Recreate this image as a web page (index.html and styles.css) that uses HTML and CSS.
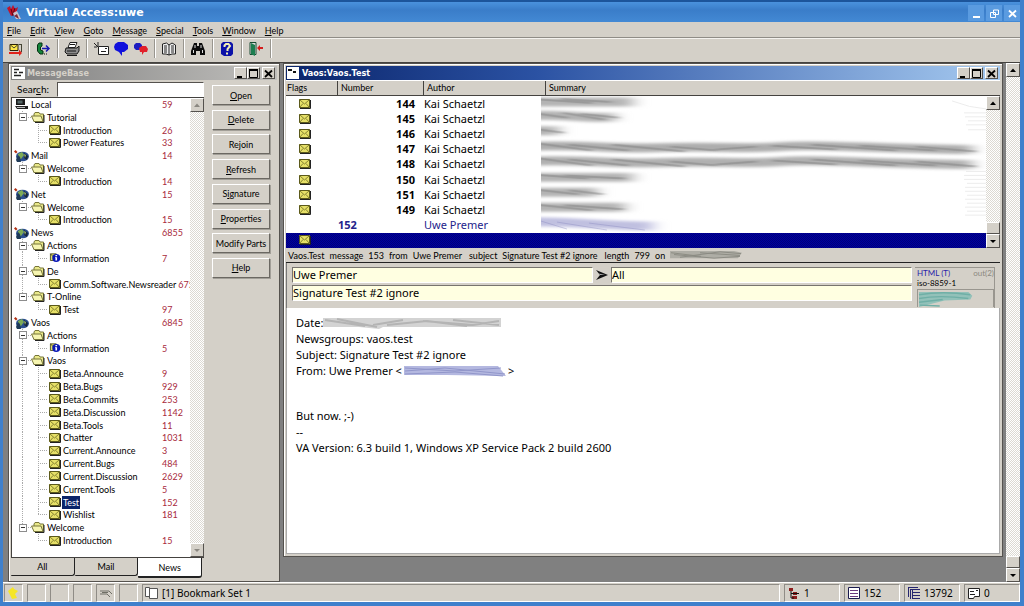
FILE: index.html
```html
<!DOCTYPE html>
<html lang="en">
<head>
<meta charset="utf-8">
<title>Virtual Access:uwe</title>
<link rel="stylesheet" href="styles.css">
</head>
<body>
<svg class="defs" aria-hidden="true">
  <defs>
    <symbol id="mail" viewBox="0 0 12 10"><path d="M0 0h11v9H0z" fill="#e6e067"/><path d="M.5.5h10v8H.5z" fill="none" stroke="#5b591c"/><path d="M1 1l4.500 4L10 1M1 8l3-3.500M10 8L7 4.500" fill="none" stroke="#6d6a24" stroke-width=".8"/><path d="M11.500 1v8.500H1" fill="none" stroke="#222"/></symbol>
    <symbol id="folder" viewBox="0 0 14 11"><path d="M3 2l1-1.500h4l1 1.500h3.500v7.500H3z" fill="#e9e889" stroke="#77763a"/><path d="M.5 4h9.500l2 5.500H3z" fill="#f6f5b0" stroke="#77763a"/><path d="M13 3v7.500H4" fill="none" stroke="#222"/></symbol>
    <symbol id="info" viewBox="0 0 13 12"><path d="M1 1h7v8H1z" fill="#e2de6b" stroke="#444418"/><path d="M1 1l4 4" stroke="#444418"/><circle cx="8" cy="6" r="4.800" fill="#0a18b4"/><path d="M7 2.500h2v1.500H7zM6.500 5H9v4H7V6h-.5z" fill="#fff"/></symbol>
    <symbol id="pc" viewBox="0 0 16 12"><path d="M2 1h9v6H2z" fill="#1b1b1b"/><path d="M3.500 2.500h5v3h-5z" fill="#566"/><path d="M1 8h13v3H3z" fill="#222"/><path d="M3 9.500h8" stroke="#bbb"/></symbol>
    <symbol id="globe" viewBox="0 0 16 12"><path d="M0 1.500L1.500 0 3.500 2 2 3.500z" fill="#b33013"/><ellipse cx="8.500" cy="6.500" rx="6.500" ry="4.800" fill="#2c4f8f"/><path d="M4 4l4-2 2 3-3 4-3-1z" fill="#7dab57"/><path d="M2 10l2-5 2 2 1 5H3z" fill="#1f3a57"/><path d="M10 3l4 3-1 4-3-2z" fill="#16253a"/><path d="M10 4l2 1-1 3z" fill="#a4bf6a"/></symbol>
    <symbol id="min" viewBox="0 0 9 9"><path d="M1 7h5v2H1z"/></symbol>
    <symbol id="max" viewBox="0 0 9 9"><path d="M.5 1h8v7.500h-8z" fill="none" stroke="currentColor"/><path d="M0 0h9v2H0z"/></symbol>
    <symbol id="close" viewBox="0 0 9 9"><path d="M1 1.500l7 6.500M8 1.500L1 8" fill="none" stroke="currentColor" stroke-width="1.800"/></symbol>
    <symbol id="up" viewBox="0 0 8 8"><path d="M1 6l3-3.500L7 6z"/></symbol>
    <symbol id="down" viewBox="0 0 8 8"><path d="M1 3h6L4 6z"/></symbol>
    <filter id="soft" x="-5%" y="-60%" width="110%" height="220%"><feGaussianBlur stdDeviation="3 0.700"/></filter>
    <filter id="softer" x="-5%" y="-60%" width="110%" height="220%"><feGaussianBlur stdDeviation="8 1.800"/></filter>
  </defs>
</svg>

<header class="titlebar">
  <svg class="logo" viewBox="0 0 14 16"><path d="M0 3l3-2 1 3 2-4 2 4 3-2-2 7-5 2z" fill="#c3132a"/><path d="M4 4l2 7M8 3L6 9" stroke="#5c0712" fill="none"/><path d="M6 8l4-2 4 8H9z" fill="#c9c2cb"/><path d="M7 11l3-2 2 5z" fill="#7d2734"/></svg>
  <h1>Virtual Access:uwe</h1>
  <div class="appctl">
    <button aria-label="Minimize"><svg viewBox="0 0 9 9"><path d="M1 7h7v2H1z"/></svg></button>
    <button aria-label="Restore"><svg viewBox="0 0 9 9"><path d="M3.500 1h5v4.500h-5zM.5 3.500h5v5h-5z" fill="none" stroke="currentColor"/></svg></button>
    <button aria-label="Close"><svg viewBox="0 0 9 9"><use href="#close"/></svg></button>
  </div>
</header>

<nav class="menu">
  <a href="#"><u>F</u>ile</a><a href="#"><u>E</u>dit</a><a href="#"><u>V</u>iew</a><a href="#"><u>G</u>oto</a><a href="#"><u>M</u>essage</a><a href="#"><u>S</u>pecial</a><a href="#"><u>T</u>ools</a><a href="#"><u>W</u>indow</a><a href="#"><u>H</u>elp</a>
</nav>

<div class="toolbar">
  <div class="tgroup first"><button aria-label="Send and receive"><svg viewBox="0 0 16 16"><path d="M2 3.500h8v6H2z" fill="#ffe84a" stroke="#2b2205"/><path d="M2.500 4L6 7l3.500-3M13.500 3v8M10.500 3.500h3" fill="none" stroke="#443"/><path d="M1 11h10V8.500l3 3.500-3 3v-2H1z" fill="#e0231b"/></svg></button></div>
  <div class="tgroup"><button aria-label="Connect"><svg viewBox="0 0 16 16"><path d="M7 2H4L2.500 4v6L5 13h3v-3L5.500 9V6L7 5z" fill="#14853a" stroke="#062e12"/><path d="M7 7.500h6M11 4.500l3 3-3 3" fill="none" stroke="#1717b0" stroke-width="1.500"/><path d="M9 13h1M11 13h1" stroke="#111"/></svg></button></div>
  <div class="tgroup"><button aria-label="Print"><svg viewBox="0 0 16 16"><path d="M6 1.500h7l-2 5H4z" fill="#fff" stroke="#222"/><path d="M2 7h11l2-2v5l-2 3H3l-2-2z" fill="#8d8d8d" stroke="#171717"/><path d="M3 10h9M6 3.500h5M3 14.500h10" stroke="#171717"/></svg></button></div>
  <div class="tgroup wide">
    <button aria-label="New message"><svg viewBox="0 0 16 16"><path d="M5.500 5.500h10v8h-10z" fill="#fff" stroke="#222"/><path d="M8 10.500h5M12 7.500h2M1 2l4 4M5 1v4M1 6h3" stroke="#222"/></svg></button>
    <button aria-label="Comment"><svg viewBox="0 0 16 16"><path d="M2 3l3-2h6l4 3v4l-4 3H9v4l-3-4-4-2-1-3z" fill="#1010dc"/></svg></button>
    <button aria-label="Reply"><svg viewBox="0 0 16 16"><path d="M1 4l2-2h4l2 2v3L6 9H3L1 7z" fill="#1c1cc0"/><path d="M6 7l3-2h4l2 3-1 3h-3l-2 3v-3H7z" fill="#e1202a"/></svg></button>
  </div>
  <div class="tgroup"><button aria-label="Address book"><svg viewBox="0 0 16 16"><path d="M1.500 3l4-1L8 4l3-2 3.500 2v9H11l-3 1-3-1H1.500z" fill="#eee" stroke="#222"/><path d="M8 4v10M3 5h3M3 7h3M3 9h3M3 11h3M10 5h3M10 7h3M10 9h3M10 11h3" stroke="#222"/></svg></button></div>
  <div class="tgroup"><button aria-label="Find"><svg viewBox="0 0 16 16"><path d="M4 2h3v3h2V2h3l3 8v4h-5v-4H6v4H1v-4z" fill="#0b0b0b"/><path d="M5 4v3M3.500 9v3M11 4v3M12.500 9v3" stroke="#ddd"/></svg></button></div>
  <div class="tgroup"><button aria-label="Help"><svg viewBox="0 0 16 16"><path d="M4 1h8l2 2v10l-2 2H5l-3-2V3z" fill="#0c12a8"/><path d="M5.500 6V4.500L7 3h2.500L11 5 8.500 8v2M8 11.500v2" fill="none" stroke="#f3f0b4" stroke-width="2"/></svg></button></div>
  <div class="tgroup"><button aria-label="Exit"><svg viewBox="0 0 16 16"><path d="M2 1.500h6v12H2z" fill="#ddd" stroke="#174b31"/><path d="M3 2l4 2v11l-4-2z" fill="#1d7e50"/><path d="M9 7l3-3v2h3v2h-3v2z" fill="#d51d1d"/></svg></button></div>
</div>

<main class="mdi">
  <section class="win base">
    <div class="wtitle inactive">
      <svg class="wicon" viewBox="0 0 13 12"><path d="M0 0h13v12H0z" fill="#fff"/><path d="M2 2.500h5M2 5.500h3M7 5.500h4M2 8.500h7" stroke="#222" stroke-width="1.500"/></svg>
      <h2>MessageBase</h2>
      <div class="wctl"><button aria-label="Minimize"><svg><use href="#min"/></svg></button><button aria-label="Maximize"><svg><use href="#max"/></svg></button><button aria-label="Close"><svg><use href="#close"/></svg></button></div>
    </div>
    <div class="basebody">
      <div class="left">
        <div class="search"><label for="q">Sear<u>c</u>h:</label><input id="q" type="text"></div>
        <div class="treebox">
          <ul class="tree">
            <li class="l0"><span><svg><use href="#pc"/></svg>Local</span><b>59</b></li>
            <li class="l1 last"><span><i></i><svg><use href="#folder"/></svg>Tutorial</span></li>
            <li class="l2"><span><svg><use href="#mail"/></svg>Introduction</span><b>26</b></li>
            <li class="l2 end"><span><svg><use href="#mail"/></svg>Power Features</span><b>33</b></li>
            <li class="l0"><span><svg><use href="#globe"/></svg>Mail</span><b>14</b></li>
            <li class="l1 last"><span><i></i><svg><use href="#folder"/></svg>Welcome</span></li>
            <li class="l2 end"><span><svg><use href="#mail"/></svg>Introduction</span><b>14</b></li>
            <li class="l0"><span><svg><use href="#globe"/></svg>Net</span><b>15</b></li>
            <li class="l1 last"><span><i></i><svg><use href="#folder"/></svg>Welcome</span></li>
            <li class="l2 end"><span><svg><use href="#mail"/></svg>Introduction</span><b>15</b></li>
            <li class="l0"><span><svg><use href="#globe"/></svg>News</span><b>6855</b></li>
            <li class="l1"><span><i></i><svg><use href="#folder"/></svg>Actions</span></li>
            <li class="l2 end cont"><span><svg><use href="#info"/></svg>Information</span><b>7</b></li>
            <li class="l1"><span><i></i><svg><use href="#folder"/></svg>De</span></li>
            <li class="l2 end cont"><span><svg><use href="#mail"/></svg>Comm.Software.Newsreader</span><b>675'</b></li>
            <li class="l1 last"><span><i></i><svg><use href="#folder"/></svg>T-Online</span></li>
            <li class="l2 end"><span><svg><use href="#mail"/></svg>Test</span><b>97</b></li>
            <li class="l0"><span><svg><use href="#globe"/></svg>Vaos</span><b>6845</b></li>
            <li class="l1"><span><i></i><svg><use href="#folder"/></svg>Actions</span></li>
            <li class="l2 end cont"><span><svg><use href="#info"/></svg>Information</span><b>5</b></li>
            <li class="l1"><span><i></i><svg><use href="#folder"/></svg>Vaos</span></li>
            <li class="l2 cont"><span><svg><use href="#mail"/></svg>Beta.Announce</span><b>9</b></li>
            <li class="l2 cont"><span><svg><use href="#mail"/></svg>Beta.Bugs</span><b>929</b></li>
            <li class="l2 cont"><span><svg><use href="#mail"/></svg>Beta.Commits</span><b>253</b></li>
            <li class="l2 cont"><span><svg><use href="#mail"/></svg>Beta.Discussion</span><b>1142</b></li>
            <li class="l2 cont"><span><svg><use href="#mail"/></svg>Beta.Tools</span><b>11</b></li>
            <li class="l2 cont"><span><svg><use href="#mail"/></svg>Chatter</span><b>1031</b></li>
            <li class="l2 cont"><span><svg><use href="#mail"/></svg>Current.Announce</span><b>3</b></li>
            <li class="l2 cont"><span><svg><use href="#mail"/></svg>Current.Bugs</span><b>484</b></li>
            <li class="l2 cont"><span><svg><use href="#mail"/></svg>Current.Discussion</span><b>2629</b></li>
            <li class="l2 cont"><span><svg><use href="#mail"/></svg>Current.Tools</span><b>5</b></li>
            <li class="l2 cont"><span><svg><use href="#mail"/></svg><em>Test</em></span><b>152</b></li>
            <li class="l2 end cont"><span><svg><use href="#mail"/></svg>Wishlist</span><b>181</b></li>
            <li class="l1 last"><span><i></i><svg><use href="#folder"/></svg>Welcome</span></li>
            <li class="l2 end"><span><svg><use href="#mail"/></svg>Introduction</span><b>15</b></li>
          </ul>
          <div class="scroll off"><button aria-label="Scroll up"><svg><use href="#up"/></svg></button><button aria-label="Scroll down"><svg><use href="#down"/></svg></button></div>
        </div>
        <div class="tabs"><button>All</button><button>Mail</button><button class="on">News</button></div>
      </div>
      <div class="actions">
        <button><u>O</u>pen</button><button><u>D</u>elete</button><button>Re<u>j</u>oin</button><button><u>R</u>efresh</button><button>S<u>i</u>gnature</button><button><u>P</u>roperties</button><button>Modify Parts</button><button><u>H</u>elp</button>
      </div>
    </div>
  </section>

  <section class="win msgs">
    <div class="wtitle">
      <svg class="wicon" viewBox="0 0 13 12"><path d="M0 0h12v12H0z" fill="#fff"/><path d="M1 2h4v2H1zM6 4h3v2H6z" fill="#111"/></svg>
      <h2>Vaos:Vaos.Test</h2>
      <div class="wctl"><button aria-label="Minimize"><svg><use href="#min"/></svg></button><button aria-label="Maximize"><svg><use href="#max"/></svg></button><button aria-label="Close"><svg><use href="#close"/></svg></button></div>
    </div>
    <div class="cols"><span>Flags</span><span>Number</span><span>Author</span><span>Summary</span></div>
    <div class="list">
      <div class="rows">
        <table>
          <tbody>
            <tr><td><svg><use href="#mail"/></svg></td><td>144</td><td>Kai Schaetzl</td><td></td></tr>
            <tr><td><svg><use href="#mail"/></svg></td><td>145</td><td>Kai Schaetzl</td><td></td></tr>
            <tr><td><svg><use href="#mail"/></svg></td><td>146</td><td>Kai Schaetzl</td><td></td></tr>
            <tr><td><svg><use href="#mail"/></svg></td><td>147</td><td>Kai Schaetzl</td><td></td></tr>
            <tr><td><svg><use href="#mail"/></svg></td><td>148</td><td>Kai Schaetzl</td><td></td></tr>
            <tr><td><svg><use href="#mail"/></svg></td><td>150</td><td>Kai Schaetzl</td><td></td></tr>
            <tr><td><svg><use href="#mail"/></svg></td><td>151</td><td>Kai Schaetzl</td><td></td></tr>
            <tr><td><svg><use href="#mail"/></svg></td><td>149</td><td>Kai Schaetzl</td><td></td></tr>
            <tr class="own"><td></td><td>152</td><td>Uwe Premer</td><td></td></tr>
            <tr class="sel"><td><svg><use href="#mail"/></svg></td><td></td><td></td><td></td></tr>
          </tbody>
        </table>
        <svg class="smears" viewBox="0 0 446 137" preserveAspectRatio="none" aria-hidden="true">
          <g fill="none" stroke="#b4b4b4" stroke-width="9" filter="url(#softer)">
            <path d="M-20 6H92"/><path d="M-20 20C20 17 50 24 74 21"/><path d="M-20 35H18"/>
            <path d="M-20 51C40 48 70 54 120 52S210 54 240 51 330 53 432 54" stroke="#adadad"/>
            <path d="M-20 66C40 63 70 69 120 67S210 69 240 66 330 68 432 69" stroke="#b0b0b0"/>
            <path d="M-20 82H92"/><path d="M-20 97H56"/><path d="M-20 112H84"/>
            <path d="M-20 127C20 125 60 131 112 131" stroke="#c0c0e0"/>
          </g>
          <g fill="none" stroke="#808080" stroke-width="2" opacity=".5" filter="url(#soft)">
            <path d="M-9 3l60 4M20 3l50 3M-9 17l36 5M22 17l42 7M40 18l38 4M-9 33l32 4"/>
            <path d="M-9 47l60 8M28 49l60 6M72 49l72 7M130 51l46 4M176 54l40-3M232 50l64 4M272 49l84 6M320 50l76 5M376 51l60 5"/>
            <path d="M-9 62l60 8M28 64l60 6M72 64l72 7M130 66l46 4M176 69l40-3M232 65l64 4M272 64l84 6M320 65l76 5M376 66l60 5"/>
            <path d="M-9 79l56 4M24 80l60 3M-9 94l46 5M28 95l34 4M-9 109l60 6M24 110l58 4"/>
          </g>
          <path d="M0 126l26 8M16 127l50 8M48 128l56 7" fill="none" stroke="#8585bd" opacity=".4"/>
          <path d="M412 5q18 7 34 8M424 17h22M425 21h21M428 25h18M426 29h20M428 34h18M426 76h20M424 80h22M424 84h22M427 88h19M425 92h21M425 96h21M427 100h19M425 104h21M427 108h19M425 112h21M427 116h19M425 120h21" fill="none" stroke="#ececec"/>
        </svg>
      </div>
      <div class="scroll thumbed"><button aria-label="Scroll up"><svg><use href="#up"/></svg></button><span class="thumb"></span><button aria-label="Scroll down"><svg><use href="#down"/></svg></button></div>
    </div>
    <div class="info"><span>Vaos.Test</span><span>message</span><span>153</span><span>from</span><span>Uwe Premer</span><span class="gap">subject</span><span>Signature Test #2 ignore</span><span class="gap">length</span><span>799</span><span>on</span>
      <svg class="scrib" viewBox="0 0 72 11" preserveAspectRatio="none"><path d="M0 1h64l8 2-4 6H0z" fill="#aeada5"/><path d="M1 3l30 4M10 8L50 2l21 2M4 5l40 4 26-2M30 3l40 3" fill="none" stroke="#8b8b82"/></svg>
    </div>
    <div class="reader">
      <div class="head">
        <div class="fields">
          <input aria-label="From" value="Uwe Premer">
          <svg class="arrow" viewBox="0 0 12 12"><path d="M0 1l12 5-12 5 4-5z" fill="#111"/><path d="M3 4.500L9 6H4z" fill="#aaa"/></svg>
          <input aria-label="To" value="All">
          <input class="subj" aria-label="Subject" value="Signature Test #2 ignore">
        </div>
        <div class="fmt">
          <div><span class="html">HTML (T)</span><span class="out">out(2)</span></div>
          <div>iso-8859-1</div>
          <svg viewBox="0 0 76 18" preserveAspectRatio="none"><path d="M1 2h50l4 4-2 4-26 1L1 18z" fill="#92c1b9"/><path d="M1 5q24-4 52 0M1 9q20-4 50 0M1 13l24-3M2 16l20 1" fill="none" stroke="#6fafa6" stroke-width="1.500"/></svg>
        </div>
      </div>
      <article>
        <p>Date:<svg class="date" viewBox="0 0 178 12" preserveAspectRatio="none"><path d="M0 1h178v9H60l-4 2-20-2H0z" fill="#d3d3d3"/><path d="M2 3l40 6M14 2l40 8M50 8l30-5M64 8l40-4 40 5M100 4l50 4 26-4M130 3l46 5" fill="none" stroke="#b4b4b4" stroke-width="2"/></svg></p>
        <p>Newsgroups: vaos.test</p>
        <p>Subject: Signature Test #2 ignore</p>
        <p>From: Uwe Premer &lt;<svg class="addr" viewBox="0 0 102 12" preserveAspectRatio="none"><path d="M0 1h94l8 10-60-1H0z" fill="#b4b8e0"/><path d="M1 3l50 3 46-3M1 6l40-3 60 6M1 9l50-2 48 4" fill="none" stroke="#9196ca"/></svg>&gt;</p>
        <p class="late">But now. ;-)</p>
        <p>--</p>
        <p>VA Version: 6.3 build 1, Windows XP Service Pack 2 build 2600</p>
      </article>
    </div>
  </section>

  <div class="scroll thumbed outer"><button aria-label="Scroll up"><svg><use href="#up"/></svg></button><span class="thumb"></span><button aria-label="Scroll down"><svg><use href="#down"/></svg></button></div>
</main>

<footer class="status">
  <span><svg viewBox="0 0 14 14"><path d="M1 5l5-4 1 2 4 2-3 3 2 4-5 1-2-4z" fill="#f5e626"/></svg></span><span></span><span></span><span></span>
  <span><svg viewBox="0 0 14 14"><path d="M1 5h9l3 3M1 8h7l3 3M3 6.500h6" fill="none" stroke="#6f6f66"/></svg></span><span></span>
  <span class="mark"><svg viewBox="0 0 14 14"><path d="M.5 1.500h4v9h-4zM4.500 2.500h8v10h-8z" fill="#fff" stroke="#555"/></svg>[1] Bookmark Set 1</span>
  <span class="cnt"><svg viewBox="0 0 14 14"><path d="M2 2h4v3H2zM6 6h4v3H6zM5 10h5v3H5z" fill="#8c1c1c"/><path d="M4 5v7h3M4 7.500h8" fill="none" stroke="#111"/></svg>1</span>
  <span class="cnt"><svg viewBox="0 0 14 14"><path d="M1.500 1.500h11v11h-11z" fill="#fff" stroke="#1b1b4e"/><path d="M3 4.500h8M3 7.500h8M3 10.500h8" stroke="#6b3a7e"/></svg>152</span>
  <span class="cnt"><svg viewBox="0 0 14 14"><path d="M1 1.500h10M1.500 1v10M3 3.500h10M3.500 3v10M6 6.500h7M6 9.500h7M6 12.500h7M5.500 3v10" fill="none" stroke="#26266e"/></svg>13792</span>
  <span class="cnt"><svg viewBox="0 0 14 14"><path d="M1.500 2.500h11v8h-5l-1 2h-5z" fill="#fff" stroke="#222"/><path d="M3 5.500h4M9 4.500h2M3 8.500h5" stroke="#222"/></svg>0</span>
</footer>
</body>
</html>
```
FILE: styles.css
```css
* { box-sizing: border-box; }
:root {
  --face: #d4d0c8;
  --ui: Lato, "Liberation Sans", sans-serif;
  --text: "Noto Sans", sans-serif;
}
body {
  margin: 0;
  height: 100vh;
  display: flex;
  flex-direction: column;
  background: var(--face);
  border: solid #3f80cc;
  border-width: 0 4px 4px 3px;
  font: 9px/13px var(--ui);
  color: #000;
  overflow: hidden;
}
button, input { font: inherit; color: inherit; margin: 0; padding: 0; border: 0; border-radius: 0; }
h1, h2, p, ul { margin: 0; padding: 0; }
a { color: inherit; text-decoration: none; }
svg { display: block; fill: currentColor; flex: none; }
.defs { position: absolute; width: 0; height: 0; }

.titlebar {
  flex: none;
  display: flex;
  align-items: center;
  height: 22px;
  margin: 0 -4px 0 -3px;
  padding: 2px 4px 0 7px;
  background: linear-gradient(#4a92dd, #3a7dc9 40%, #4389d4);
  border-top: 2px solid #1c559b;
  color: #fff;
}
.logo { width: 14px; height: 16px; margin-right: 5px; }
.titlebar h1 { flex: 1; font: bold 11px/16px "DejaVu Sans", sans-serif; }
.appctl { display: flex; gap: 2px; }
.appctl button { width: 16px; height: 16px; display: grid; place-items: center; background: #5a9be0; color: #fff; }
.appctl svg { width: 9px; height: 9px; }

.menu { flex: none; display: flex; gap: 9px; height: 16px; padding: 2px 4px; border-bottom: 1px solid #8f8c86; }
.toolbar { flex: none; display: flex; height: 24px; border-top: 1px solid #f4f2ee; padding: 0 0 4px; }
.tgroup { display: flex; justify-content: center; align-items: center; width: 29px; border-right: 1px solid #98958e; box-shadow: 1px 0 #fff; }
.tgroup.first { width: 26px; }
.tgroup.wide { width: 68px; gap: 4px; }
.toolbar button { background: none; }
.toolbar svg { width: 16px; height: 16px; }

.mdi { flex: 1; min-height: 0; display: flex; background: #808080; border-top: 1px solid #44423f; padding-left: 5px; }
.win { display: flex; flex-direction: column; background: var(--face); border: 1px solid #55524e; box-shadow: inset 1px 1px #fff; padding: 2px; }
.base { width: 272px; flex: none; }
.msgs { flex: 1; min-width: 0; margin: 0 3px 25px 3px; }

.wtitle { flex: none; display: flex; align-items: center; height: 14px; padding: 0 2px 0 1px; color: #fff; background: linear-gradient(90deg, #0a246a, #2b52a3 35%, #a6caf0); }
.wtitle.inactive { color: #d4d0c8; background: linear-gradient(90deg, #808080, #c0bfbc); }
.wtitle h2 { flex: 1; font: bold 9px/14px "DejaVu Sans Condensed", "DejaVu Sans", sans-serif; }
.wicon { width: 13px; height: 12px; margin-right: 2px; }
.wctl { display: flex; }
.wctl button { width: 13px; height: 12px; display: grid; place-items: center; }
.wctl button:last-child { margin-left: 2px; }
.wctl svg { width: 9px; height: 9px; }
.wctl button, .scroll button, .thumb { background: var(--face); border: 1px solid; border-color: #fff #55524e #55524e #fff; color: #000; }

.basebody { flex: 1; min-height: 0; display: flex; padding: 1px 0 0; }
.left { flex: 1; min-width: 0; display: flex; flex-direction: column; padding-bottom: 1px; }
.search { flex: none; display: flex; align-items: center; height: 16px; }
.search label { width: 46px; padding-left: 6px; font-size: 10px; }
.search input { flex: 1; min-width: 0; height: 15px; background: #fff; border: 1px solid; border-color: #55524e #fff #fff #55524e; }
.treebox { flex: 1; min-height: 0; display: flex; background: #fff; border: solid #44423f; border-width: 1px 0 1px 1px; }
.tree { flex: 1; min-width: 0; display: grid; grid-auto-rows: minmax(0, 1fr); list-style: none; overflow: hidden; padding-bottom: 10px; }
.tree li { display: flex; align-items: center; overflow: hidden; background-repeat: no-repeat; }
.tree li > span { display: flex; align-items: center; flex: none; min-width: 150px; white-space: nowrap; padding-right: 2px; }
.tree b { font-weight: normal; color: #a82a3c; }
.tree em { font-style: normal; background: #0a246a; color: #fff; margin: 0 -1px; padding: 0 1px; }
.tree .l0 > span { padding-left: 2px; }
.tree .l0 svg { width: 16px; height: 12px; margin-right: 1px; }
.tree .l1 > span { padding-left: 7px; }
.tree .l1 svg { width: 14px; height: 11px; margin: 0 2px 0 4px; }
.tree .l2 > span { padding-left: 37px; }
.tree .l2 svg { width: 12px; height: 10px; margin-right: 2px; }
.tree i { width: 8px; height: 8px; border: 1px solid #8d8d8d; background: linear-gradient(#333, #333) center / 4px 1px no-repeat #fff; }
.tree .l1 { background-image: repeating-linear-gradient(#aaa 0 1px, transparent 1px 2px), repeating-linear-gradient(90deg, #aaa 0 1px, transparent 1px 2px); background-size: 1px 100%, 10px 1px; background-position: 10px 0, 10px 50%; }
.tree .l1.last { background-size: 1px 50%, 10px 1px; }
.tree .l2 { background-image: repeating-linear-gradient(#aaa 0 1px, transparent 1px 2px), repeating-linear-gradient(90deg, #aaa 0 1px, transparent 1px 2px), repeating-linear-gradient(#aaa 0 1px, transparent 1px 2px); background-size: 1px 100%, 10px 1px, 0 0; background-position: 26px 0, 26px 50%, 10px 0; }
.tree .l2.end { background-size: 1px 50%, 10px 1px, 0 0; }
.tree .l2.cont { background-size: 1px 100%, 10px 1px, 1px 100%; }
.tree .l2.end.cont { background-size: 1px 50%, 10px 1px, 1px 100%; }

.scroll { flex: none; width: 14px; display: flex; flex-direction: column; justify-content: space-between; background: conic-gradient(#fff 25%, #dcd9d2 0 50%, #fff 0 75%, #dcd9d2 0) 0 0 / 2px 2px; }
.scroll button { width: 100%; height: 14px; display: grid; place-items: center; }
.scroll svg { width: 8px; height: 8px; }
.scroll.off svg { color: #8b8881; }
.scroll.thumbed .thumb { height: 12px; margin-top: auto; }

.tabs { flex: none; display: flex; height: 20px; width: 191px; }
.tabs button { flex: 1; background: var(--face); border: solid #222; border-width: 0 1px 1px 0; border-radius: 0 0 3px 1px; margin-bottom: 2px; }
.tabs button.on { background: #fff; margin-bottom: 0; border-bottom-width: 2px; }

.actions { flex: none; display: flex; flex-direction: column; justify-content: space-between; width: 73px; height: 197px; padding: 4px 7px 0 8px; }
.actions button { height: 20px; background: var(--face); border: 1px solid; border-color: #fff #6b6862 #6b6862 #fff; box-shadow: 1px 1px #a29f98; white-space: nowrap; }

.cols { flex: none; display: flex; height: 16px; border-bottom: 1px solid #44423f; border-top: 1px solid #fff; line-height: 14px; }
.cols span { padding-left: 3px; border-right: 1px solid #44423f; }
.cols span:nth-child(1) { width: 52px; padding-left: 1px; }
.cols span:nth-child(2) { width: 86px; }
.cols span:nth-child(3) { width: 122px; }
.cols span:nth-child(4) { flex: 1; border: 0; }

.list { flex: none; display: flex; height: 152px; background: #fff; }
.rows { flex: 1; min-width: 0; position: relative; }
.rows table { width: 100%; height: 152px; border-collapse: collapse; table-layout: fixed; font: 11px/14px var(--text); }
.rows tr { height: 10%; }
.rows td { padding: 0; }
.rows td:nth-child(1) { width: 52px; padding-left: 13px; }
.rows td:nth-child(2) { width: 77px; text-align: right; font-weight: bold; }
.rows td:nth-child(3) { width: 127px; padding-left: 9px; }
.rows td svg { width: 12px; height: 10px; }
.own { color: #23238c; }
.rows .own td:nth-child(2) { text-align: left; }
.sel { background: conic-gradient(#00007a 25%, #0000a0 0 50%, #00007a 0 75%, #0000a0 0) 0 0 / 2px 2px; }
.smears { position: absolute; top: 0; left: 255px; width: calc(100% - 255px); height: 136px; overflow: hidden; }

.info { flex: none; display: flex; align-items: center; gap: 5px; height: 15px; padding-left: 2px; border-bottom: 1px solid #222; }
.info .gap { margin-left: 2px; }
.scrib { width: 72px; height: 10px; }

.reader { flex: 1; min-height: 0; display: flex; flex-direction: column; font: 11px/16px var(--text); }
.head { flex: none; display: grid; grid-template-columns: 1fr 80px; gap: 3px; height: 45px; padding: 4px 5px 0 5px; border-left: 1px solid #777; }
.fields { display: grid; grid-template-columns: 1fr 18px 1fr; grid-auto-rows: 16px; row-gap: 2px; align-items: center; }
.fields input { width: 100%; min-width: 0; height: 16px; background: #ffffe1; border: 1px solid; border-color: #77746e #fff #fff #77746e; }
.subj { grid-column: 1 / -1; }
.arrow { width: 12px; height: 12px; justify-self: center; }
.fmt { border: 1px solid #99968f; border-bottom: 0; border-left: 0; font: 8px/10px var(--ui); padding-left: 2px; overflow: hidden; }
.fmt div { display: flex; justify-content: space-between; }
.fmt svg { width: 100%; height: 18px; border: 1px solid #99968f; border-bottom: 0; margin-top: 1px; }
.html { color: #2a1fa8; }
.out { color: #8b8881; }
article { flex: 1; min-height: 0; background: #fff; border: 1px solid #aaa; border-top: 0; padding: 7px 9px; }
article p { display: flex; align-items: center; }
article .late { margin-top: 29px; }
.date { width: 178px; height: 12px; }
.addr { width: 102px; height: 12px; margin: 0 2px; }

.status { flex: none; display: flex; gap: 4px; height: 20px; padding: 1px 0 0 1px; border-top: 1px solid #fff; font: 10px/16px var(--text); }
.status > span { display: flex; align-items: center; gap: 3px; width: 19px; border: 1px solid; border-color: #8f8c86 #fff #fff #8f8c86; padding-left: 2px; white-space: nowrap; }
.status svg { width: 14px; height: 14px; }
.status > .mark { flex: 1; }
.status > .cnt { width: 56px; }
```
